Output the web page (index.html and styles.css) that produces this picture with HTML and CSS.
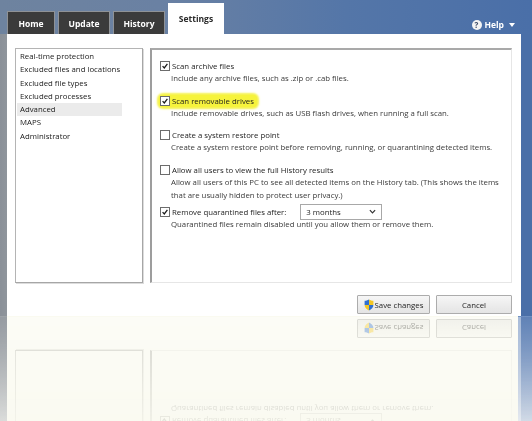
FILE: index.html
```html
<!DOCTYPE html>
<html>
<head>
<meta charset="utf-8">
<link rel="stylesheet" href="styles.css">
</head>
<body>
<div class="window">
  <div class="topbar">
    <nav class="tabs">
      <div class="tab tab-home">Home</div>
      <div class="tab tab-update">Update</div>
      <div class="tab tab-history">History</div>
      <div class="tab tab-active">Settings</div>
    </nav>
    <div class="help">
      <span class="help-icon">?</span>
      <span class="help-text">Help</span>
      <span class="help-arrow"></span>
    </div>
  </div>
  <div class="frame">
    <div class="sheet">
      <div class="main">
        <ul class="nav">
          <li>Real-time protection</li>
          <li>Excluded files and locations</li>
          <li>Excluded file types</li>
          <li>Excluded processes</li>
          <li class="selected">Advanced</li>
          <li>MAPS</li>
          <li>Administrator</li>
        </ul>
        <div class="settings">
          <div class="opt">
            <div class="opt-head">
              <span class="cb"><svg viewBox="0 0 10 10"><path d="M2 5.2 L4.1 7.4 L8 2.4"/></svg></span>
              <span class="title">Scan archive files</span>
            </div>
            <div class="desc">Include any archive files, such as .zip or .cab files.</div>
          </div>
          <div class="opt">
            <div class="opt-head hl">
              <span class="cb"><svg viewBox="0 0 10 10"><path d="M2 5.2 L4.1 7.4 L8 2.4"/></svg></span>
              <span class="title">Scan removable drives</span>
            </div>
            <div class="desc">Include removable drives, such as USB flash drives, when running a full scan.</div>
          </div>
          <div class="opt">
            <div class="opt-head">
              <span class="cb"></span>
              <span class="title">Create a system restore point</span>
            </div>
            <div class="desc">Create a system restore point before removing, running, or quarantining detected items.</div>
          </div>
          <div class="opt">
            <div class="opt-head">
              <span class="cb"></span>
              <span class="title">Allow all users to view the full History results</span>
            </div>
            <div class="desc">Allow all users of this PC to see all detected items on the History tab. (This shows the items<br>that are usually hidden to protect user privacy.)</div>
          </div>
          <div class="opt tight">
            <div class="opt-head">
              <span class="cb"><svg viewBox="0 0 10 10"><path d="M2 5.2 L4.1 7.4 L8 2.4"/></svg></span>
              <span class="title">Remove quarantined files after:</span>
              <span class="select">3 months<svg class="chev" viewBox="0 0 8 5"><path d="M1 1 L4 4 L7 1"/></svg></span>
            </div>
            <div class="desc">Quarantined files remain disabled until you allow them or remove them.</div>
          </div>
        </div>
      </div>
      <div class="actions">
        <button class="btn btn-save">
          <svg class="shield" viewBox="0 0 10 12">
            <defs><clipPath id="sh"><path d="M5 0.5 C3.5 1.5 2 1.8 0.6 1.8 L0.6 6 C0.6 8.7 2.6 10.4 5 11.5 C7.4 10.4 9.4 8.7 9.4 6 L9.4 1.8 C8 1.8 6.5 1.5 5 0.5 Z"/></clipPath></defs>
            <g clip-path="url(#sh)">
              <rect x="0" y="0" width="5" height="6" fill="#2f6fd0"/>
              <rect x="5" y="0" width="5" height="6" fill="#f3c623"/>
              <rect x="0" y="6" width="5" height="6" fill="#f3c623"/>
              <rect x="5" y="6" width="5" height="6" fill="#2f6fd0"/>
            </g>
          </svg>Save changes</button>
        <button class="btn btn-cancel">Cancel</button>
      </div>
    </div>
  </div>
</div>
</body>
</html>
```

FILE: styles.css
```css
html, body {
  margin: 0;
  padding: 0;
}
body {
  width: 532px;
  height: 421px;
  overflow: hidden;
  background:
    linear-gradient(to bottom, #9da2a7 316px, #e4e5e2 421px) no-repeat 0 0 / 7px 100%,
    linear-gradient(to bottom, #6f8fc0 316px, #e2e7ee 421px) no-repeat 100% 0 / 14px 100%,
    #fafaf0;
  font-family: "Open Sans", "Noto Sans", sans-serif;
  font-size: 7.8px;
  color: #222;
}
.window {
  width: 532px;
  height: 316px;
  display: flex;
  flex-direction: column;
  background: linear-gradient(to right, #8a9098 0, #8f959c 7px, #4a6fa8 7px, #4a6fa8 100%);
  -webkit-box-reflect: below 1px linear-gradient(to bottom, rgba(0,0,0,0) 0%, rgba(0,0,0,0) 62%, rgba(0,0,0,0.1) 67%, rgba(0,0,0,0.4) 100%);
}
.topbar {
  height: 35px;
  display: flex;
  align-items: flex-end;
  padding-left: 7px;
  box-sizing: border-box;
  background: linear-gradient(to right, #6e839f 0%, #6a81a3 30%, #5476a8 65%, #4a6fa8 100%);
}
.tabs {
  display: flex;
  align-items: flex-end;
  gap: 3px;
}
.tab {
  height: 23px;
  box-sizing: border-box;
  display: flex;
  align-items: center;
  justify-content: center;
  font-weight: bold;
  font-size: 8.5px;
  color: #fff;
  background: #3b3b3b;
  border: 1px solid #8f9296;
  border-bottom: none;
  padding-top: 1px;
}
.tab-home { width: 48px; }
.tab-update { width: 52px; }
.tab-history { width: 52px; }
.tab-active {
  width: 56px;
  height: 31px;
  background: #fff;
  color: #2a2a2a;
  border: none;
  padding-top: 0;
}
.help {
  margin-left: auto;
  align-self: flex-start;
  margin-top: 19px;
  margin-right: 17px;
  display: flex;
  align-items: center;
  gap: 3px;
  color: #fff;
  font-weight: bold;
  font-size: 8.5px;
  line-height: 12px;
}
.help-icon {
  width: 10px;
  height: 10px;
  border-radius: 50%;
  background: #f4f4f4;
  color: #3a4a66;
  font-size: 8px;
  line-height: 10px;
  text-align: center;
  font-weight: bold;
}
.help-arrow {
  width: 0;
  height: 0;
  margin-left: 2px;
  border-left: 3px solid transparent;
  border-right: 3px solid transparent;
  border-top: 4px solid #fff;
}
.frame {
  flex: 1;
  display: flex;
  padding-left: 7px;
  padding-right: 11px;
}
.sheet {
  flex: 1;
  background: #fff;
  padding: 14px 9px 2px 8px;
  display: flex;
  flex-direction: column;
}
.main {
  height: 235px;
  display: flex;
  gap: 7px;
}
.nav {
  list-style: none;
  margin: 0;
  padding: 1px 0 0 0;
  width: 128px;
  box-sizing: border-box;
  border: 1px solid #b4b4b4;
  border-right-color: #a6a6a6;
  border-bottom-color: #a6a6a6;
  box-shadow: 1px 1px 0 #dcdcdc;
}
.nav li {
  width: 105px;
  margin-left: 1px;
  padding-left: 3px;
  box-sizing: border-box;
  line-height: 13.3px;
  color: #202020;
}
.nav li.selected {
  background: #ebebeb;
}
.settings {
  flex: 1;
  box-sizing: border-box;
  border-left: 2px solid #9d9d9d;
  border-top: 2px solid #a9a9a9;
  border-right: 1px solid #e6e6e6;
  border-bottom: 1px solid #e6e6e6;
  padding: 10px 0 0 8px;
}
.opt + .opt {
  margin-top: 9.5px;
}
.opt.tight {
  margin-top: 4px;
}
.opt-head {
  display: flex;
  align-items: center;
  height: 12px;
  gap: 2px;
}
.opt-head.hl {
  display: inline-flex;
  background: #f6f33c;
  border-radius: 4px;
  box-shadow: 0 0 2px 2px #f6f34e;
  padding-right: 3px;
  margin-left: -1px;
  padding-left: 1px;
}
.cb {
  width: 10px;
  height: 10px;
  box-sizing: border-box;
  border: 1px solid #6c6c6c;
  background: #fff;
  flex: none;
  display: flex;
}
.cb svg {
  width: 8px;
  height: 8px;
  fill: none;
  stroke: #1a1a1a;
  stroke-width: 1.6;
}
.title {
  color: #1c1c1c;
  white-space: nowrap;
}
.desc {
  padding-left: 11px;
  line-height: 13px;
  color: #3a3a3a;
  white-space: nowrap;
}
.select {
  margin-left: 12px;
  width: 82px;
  height: 16px;
  box-sizing: border-box;
  border: 1px solid #a8a8a8;
  background: #fff;
  display: flex;
  align-items: center;
  justify-content: space-between;
  padding: 0 5px 0 5px;
  color: #1c1c1c;
}
.chev {
  width: 7px;
  height: 5px;
  fill: none;
  stroke: #333;
  stroke-width: 1.4;
}
.actions {
  margin-top: 12px;
  display: flex;
  justify-content: flex-end;
  gap: 6px;
}
.btn {
  height: 19px;
  box-sizing: border-box;
  border: 1px solid #acacac;
  border-radius: 1px;
  background: linear-gradient(to bottom, #f6f6f6, #e4e4e4);
  font-family: "Open Sans", "Noto Sans", sans-serif;
  font-size: 7.8px;
  color: #1e1e1e;
  display: flex;
  align-items: center;
  justify-content: center;
  padding: 0;
  margin: 0;
}
.btn-save {
  width: 73px;
  gap: 1px;
}
.btn-cancel {
  width: 76px;
}
.shield {
  width: 10px;
  height: 12px;
}
```
